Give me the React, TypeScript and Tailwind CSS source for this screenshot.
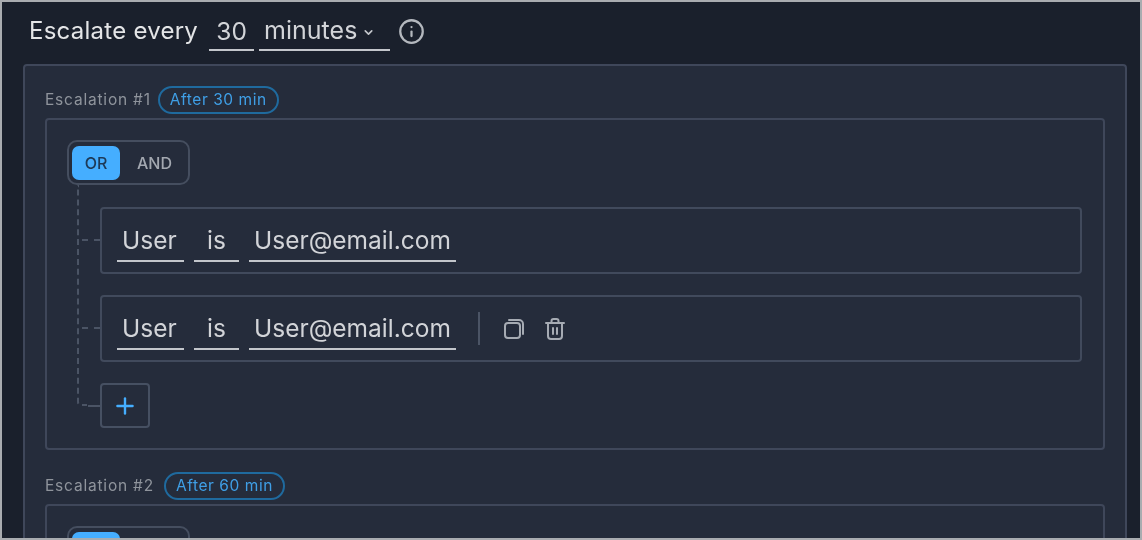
import React from "react";
import { ChevronDown, Info, Plus } from "lucide-react";

function Field({ value, className }: { value: string; className: string }) {
  return (
    <span className={`flex h-[42px] items-center border-b-2 border-[#c3c6cb] pt-[1px] text-[24.5px] leading-none text-[#d2d4d8] ${className}`}>
      {value}
    </span>
  );
}

function CopyIcon() {
  return (
    <svg width="22" height="22" viewBox="0 0 22 22" fill="none" stroke="#a6abb3" strokeWidth="2" strokeLinejoin="round" strokeLinecap="round">
      <rect x="2" y="5" width="15" height="15" rx="3" />
      <path d="M6 2h10a4 4 0 0 1 4 4v10" />
    </svg>
  );
}

function TrashIcon() {
  return (
    <svg width="22" height="24" viewBox="0 0 22 24" fill="none" stroke="#a6abb3" strokeWidth="2" strokeLinejoin="round" strokeLinecap="round">
      <path d="M2 6h18" />
      <path d="M7.5 6V4a2 2 0 0 1 2-2h3a2 2 0 0 1 2 2v2" />
      <path d="M4 6v13a3 3 0 0 0 3 3h8a3 3 0 0 0 3-3V6" />
      <path d="M9 11v6M13 11v6" />
    </svg>
  );
}

function Rule({ actions }: { actions?: boolean }) {
  return (
    <div className="relative flex h-[67px] items-center rounded-[4px] border-2 border-[#414a5c] pl-[15px]">
      <span className="absolute left-[-20px] top-[30px] w-[18px] border-t-2 border-dashed border-[#4b5465]" />
      <div className="flex items-center gap-[10px]">
        <Field value="User" className="w-[67px] pl-[5px]" />
        <Field value="is" className="w-[45px] justify-center" />
        <Field value="User@email.com" className="w-[207px] pl-[5px]" />
      </div>
      {actions && (
        <div className="ml-[22px] flex items-center">
          <span className="h-[33px] w-[2px] bg-[#4b5465]" />
          <span className="ml-[23px] flex"><CopyIcon /></span>
          <span className="ml-[19px] flex"><TrashIcon /></span>
        </div>
      )}
    </div>
  );
}

function Toggle() {
  return (
    <div className="flex h-[45px] w-[123px] items-center rounded-[10px] border-2 border-[#454e5f] pl-[3px]">
      <span className="flex h-[34px] w-[48px] items-center justify-center rounded-[7px] bg-[#45aeff] text-[16px] font-medium leading-none text-[#1d3a58]">OR</span>
      <span className="ml-[17px] text-[16px] font-medium leading-none text-[#a3a8b0]">AND</span>
    </div>
  );
}

function Heading({ n, after, gap }: { n: number; after: string; gap: string }) {
  return (
    <div className={`flex h-[28px] items-center ${gap}`}>
      <span className="text-[15.5px] tracking-[0.8px] text-[#8f949c]">Escalation #{n}</span>
      <span className="flex h-[28px] items-center rounded-full border-2 border-[#1f6a9e] px-[10px] text-[15.5px] tracking-[0.55px] text-[#3f9fe6]">
        After {after} min
      </span>
    </div>
  );
}

export default function App() {
  return (
    <div className="h-[540px] w-[1142px] overflow-hidden border-2 border-[#a9acb0] bg-[#1a202c] font-['Inter',sans-serif] blur-[0.5px]">
      <div className="flex h-[58px] items-center pl-[27px]">
        <span className="text-[24px] tracking-[0.25px] text-[#e4e5e7]">Escalate every</span>
        <span className="ml-[11px] flex h-[40px] w-[45px] items-center justify-center border-b-2 border-[#c3c6cb] pt-[2px] text-[24.5px] text-[#d2d4d8]">30</span>
        <span className="ml-[5px] flex h-[40px] w-[131px] items-center border-b-2 border-[#c3c6cb] pl-[5px] pt-[2px] text-[25px] text-[#d2d4d8]">
          minutes
          <ChevronDown size={13} strokeWidth={3} className="ml-[5px] mt-[2px] text-[#c3c6cb]" />
        </span>
        <Info size={27} strokeWidth={2} className="ml-[8px] text-[#b4b8be]" />
      </div>

      <div className="ml-[21px] mt-[4px] h-[600px] w-[1104px] rounded-[4px] border-2 border-[#3f475a] bg-[#252c3b] px-[20px] pt-[20px]">
        <Heading n={1} after="30" gap="gap-[7px]" />
        <div className="mt-[4px] h-[332px] rounded-[4px] border-2 border-[#3f475a] pl-[20px] pr-[21px] pt-[20px]">
          <Toggle />
          <div className="relative mt-[22px] flex flex-col gap-[21px] pl-[33px]">
            <span className="absolute left-[10px] top-[-22px] h-[221px] w-[10px] rounded-bl-[4px] border-b-2 border-l-2 border-dashed border-[#4b5465]" />
            <Rule />
            <Rule actions />
            <span className="relative flex h-[45px] w-[50px] items-center justify-center rounded-[4px] border-2 border-[#465062]">
              <span className="absolute left-[-14px] top-[20px] w-[12px] border-t-2 border-dashed border-[#4b5465]" />
              <Plus size={26} strokeWidth={2.2} className="text-[#45aeff]" />
            </span>
          </div>
        </div>
        <div className="mt-[22px]">
          <Heading n={2} after="60" gap="gap-[10px]" />
        </div>
        <div className="mt-[4px] h-[200px] rounded-[4px] border-2 border-[#3f475a] pl-[20px] pt-[20px]">
          <Toggle />
        </div>
      </div>
    </div>
  );
}
